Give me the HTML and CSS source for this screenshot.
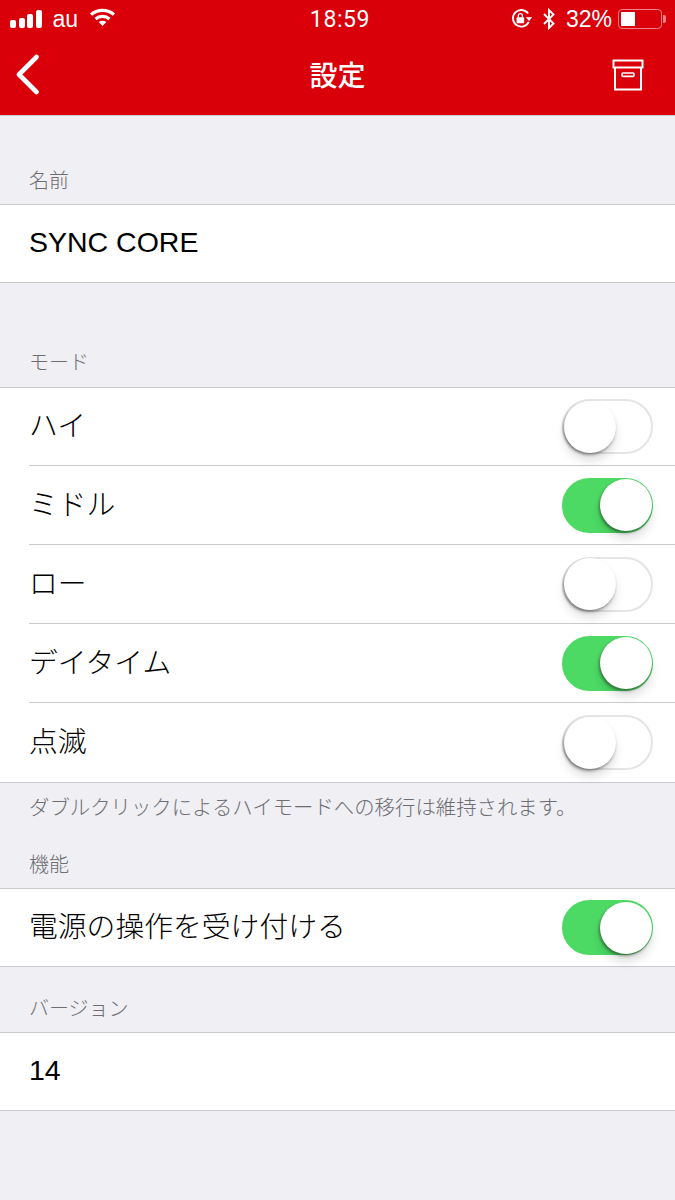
FILE: index.html
```html
<!DOCTYPE html>
<html lang="ja">
<head>
<meta charset="utf-8">
<title>設定</title>
<link rel="stylesheet" href="styles.css">
</head>
<body>
<header class="topbar">
  <div class="status">
    <div class="status-left">
      <div class="signal"><i class="b1"></i><i class="b2"></i><i class="b3"></i><i class="b4"></i></div>
      <span class="carrier">au</span>
      <svg class="wifi" width="27" height="20" viewBox="0 0 26 20"><path d="M1.5 6.6C7.8 1 18.2 1 24.5 6.6" fill="none" stroke="#fff" stroke-width="3.2"/><path d="M6 11C10 7.6 16 7.6 20 11" fill="none" stroke="#fff" stroke-width="3.2"/><path d="M13 18 9.2 14C11.4 12.4 14.6 12.4 16.8 14Z" fill="#fff"/></svg>
    </div>
    <div class="clock">18:59</div>
    <div class="status-right">
      <svg class="lock" width="24" height="22" viewBox="0 0 22 20"><path d="M17.2 12.6A7.6 7.6 0 1 1 16.6 5" fill="none" stroke="#fff" stroke-width="1.7"/><path d="M14.4 8.5h6l-3 3.4Z" fill="#fff"/><rect x="6" y="8.4" width="7" height="5.6" rx="1" fill="#fff"/><path d="M7.6 8.6V7a1.9 1.9 0 0 1 3.8 0v1.6" fill="none" stroke="#fff" stroke-width="1.2"/></svg>
      <svg class="bt" width="14" height="22" viewBox="0 0 14 22"><path d="M2 6 11.5 15.5 7 20V2l4.5 4.5L2 16" fill="none" stroke="#fff" stroke-width="1.9"/></svg>
      <span class="pct">32%</span>
      <div class="battery"><div class="level"></div></div>
      <div class="nub"></div>
    </div>
  </div>
  <nav class="navbar">
    <svg class="back" width="26" height="42" viewBox="0 0 26 42"><path d="M21.5 3 4 20.5 21.5 38" fill="none" stroke="#fff" stroke-width="4.6" stroke-linecap="round" stroke-linejoin="round"/></svg>
    <h1 class="title">設定</h1>
    <svg class="archive" width="32" height="32" viewBox="0 0 32 32"><path d="M1.5 1.5h29v7h-29ZM3 8.5h26v22H3Z" fill="none" stroke="#fff" stroke-width="2"/><rect x="10" y="14" width="12" height="3.4" rx="1" fill="none" stroke="#fff" stroke-width="1.6"/></svg>
  </nav>
</header>

<main>
  <p class="label first">名前</p>
  <section class="group"><div class="row"><span>SYNC CORE</span></div></section>

  <p class="label mode">モード</p>
  <section class="group">
    <div class="row"><span class="ja">ハイ</span><div class="switch"><div class="knob"></div></div></div>
    <div class="row"><span class="ja">ミドル</span><div class="switch on"><div class="knob"></div></div></div>
    <div class="row"><span class="ja">ロー</span><div class="switch"><div class="knob"></div></div></div>
    <div class="row"><span class="ja">デイタイム</span><div class="switch on"><div class="knob"></div></div></div>
    <div class="row"><span class="ja">点滅</span><div class="switch"><div class="knob"></div></div></div>
  </section>
  <p class="note">ダブルクリックによるハイモードへの移行は維持されます。</p>

  <p class="label func">機能</p>
  <section class="group">
    <div class="row"><span class="ja">電源の操作を受け付ける</span><div class="switch on"><div class="knob"></div></div></div>
  </section>

  <p class="label ver">バージョン</p>
  <section class="group"><div class="row"><span>14</span></div></section>
</main>
</body>
</html>
```
FILE: styles.css
```css
* { box-sizing: border-box; }
html, body { margin: 0; padding: 0; }
body {
  width: 675px;
  height: 1200px;
  overflow: hidden;
  background: #efeff4;
  font-family: "Liberation Sans", "Noto Sans CJK JP", sans-serif;
  color: #000;
}
.topbar { background: #d9000a; height: 116px; color: #fff; border-bottom: 1px solid #c9c9cc; }
.status { height: 38px; display: flex; align-items: center; justify-content: space-between; padding: 0 9px 0 10px; position: relative; }
.status-left, .status-right { display: flex; align-items: center; }
.signal { display: flex; align-items: flex-end; gap: 2.5px; height: 18px; }
.signal i { display: block; width: 6px; background: #fff; border-radius: 2px; }
.b1 { height: 8px; } .b2 { height: 10px; } .b3 { height: 14px; } .b4 { height: 18px; }
.carrier { font-size: 23px; margin-left: 11px; }
.wifi { margin-left: 11px; margin-top: -3px; }
.clock { position: absolute; left: 0; right: 0; padding-left: 5px; text-align: center; font: 400 23px Roboto, "Liberation Sans", sans-serif; letter-spacing: 0.6px; }
.lock { margin-right: 8px; }
.bt { margin-right: 10px; }
.pct { font-size: 23px; margin-right: 6px; }
.battery { width: 44px; height: 20px; border: 1.5px solid #f0808a; border-radius: 4px; padding: 2px; }
.level { width: 14px; height: 100%; background: #fff; }
.nub { width: 3px; height: 8px; background: #f0808a; border-radius: 0 2px 2px 0; margin-left: 1px; }
.navbar { height: 77px; display: flex; align-items: center; justify-content: space-between; padding: 0 31px 4px 15px; position: relative; }
.title { position: absolute; left: 0; right: 0; margin: 0; text-align: center; font-family: "Noto Sans CJK JP", sans-serif; font-size: 28px; font-weight: 500; line-height: 77px; top: -2px; }
.label { margin: 0; padding: 0 29px; font-family: "Noto Sans CJK JP", sans-serif; font-size: 20px; font-weight: 300; line-height: 28px; color: #6d6d72; }
.first { padding-top: 50px; height: 88px; }
.mode { margin-top: 65px; height: 39px; }
.func { height: 40px; padding-top: 2px; }
.ver { margin-top: 27px; height: 38px; }
.group { background: #fff; border-top: 1px solid #c9c9ce; border-bottom: 1px solid #c9c9ce; }
.row { height: 78px; margin-left: 29px; padding-right: 22px; display: flex; align-items: center; justify-content: space-between; font-size: 28.5px; font-weight: 300; border-bottom: 1px solid #c9c9ce; }
.row > span { padding-bottom: 2px; }
.row > span.ja { padding-bottom: 6px; font-size: 28.8px; }
.row:last-child { border-bottom: 0; }
.row + .row { height: 79px; }
.row:only-child { height: 77px; }
.note { margin: 0; height: 65px; padding: 9px 29px 0; font-family: "Noto Sans CJK JP", sans-serif; font-size: 20.4px; font-weight: 300; line-height: 28px; color: #6d6d72; white-space: nowrap; }
.switch { position: relative; width: 91px; height: 55px; border-radius: 28px; border: 2.5px solid #e5e5e5; background: #fff; }
.knob { position: absolute; left: 0; top: -0.5px; width: 52px; height: 52px; border-radius: 50%; background: #fff; box-shadow: -1px 2px 3px rgba(0,0,0,.4), 0 8px 10px rgba(0,0,0,.12); }
.switch.on { background: #4cd964; border-color: #4cd964; }
.switch.on .knob { left: 35.5px; }
```
